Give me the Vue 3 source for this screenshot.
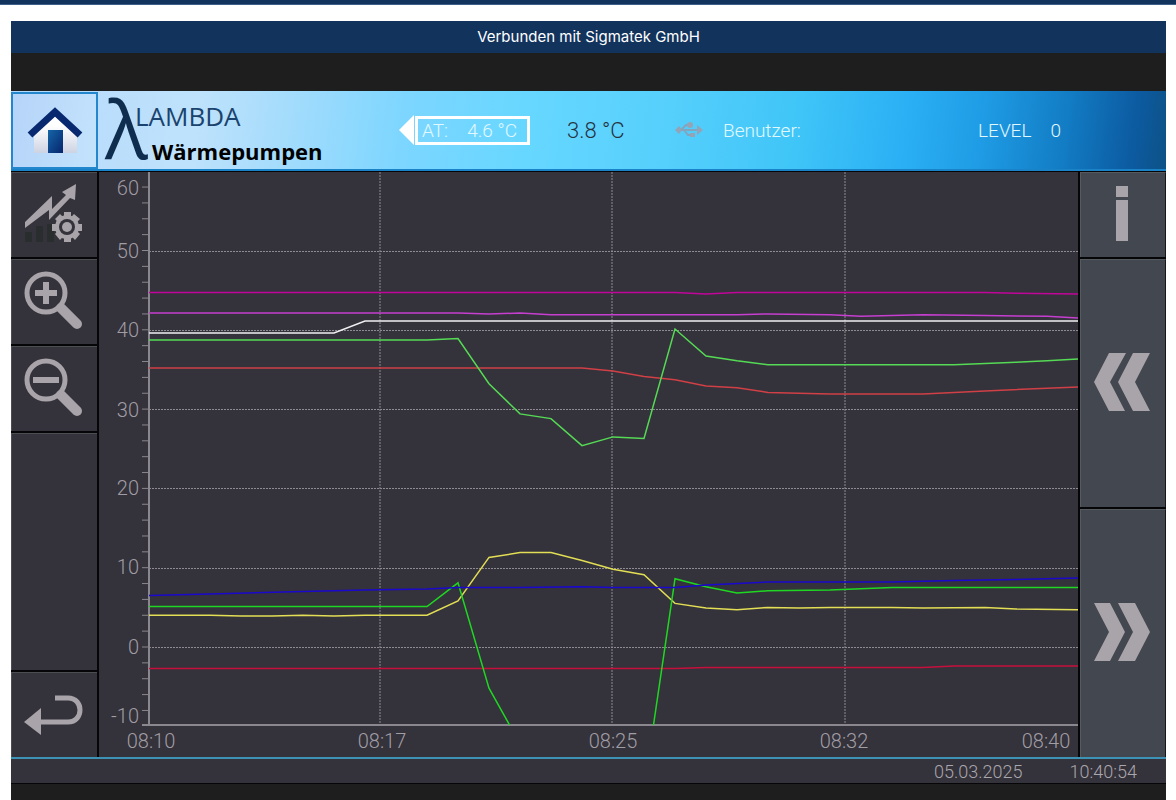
<script setup>
import { ref, computed } from 'vue';

const title = ref('Verbunden mit Sigmatek GmbH');
const outside = ref('4.6 °C');
const average = ref('3.8 °C');
const level = ref(0);
const date = ref('05.03.2025');
const time = ref('10:40:54');

// plot geometry inside the 979 x 585 drawing
const left = 50;
const right = 979;
const bottom = 553;
const toX = (minute) => 49 + minute * 31;
const toY = (value) => 475 - value * 7.93;

const gridValues = [50, 40, 30, 20, 10, 0];
const gridX = [281, 513, 746];

const ticks = [];
for (let v = -8; v <= 60; v += 2) ticks.push(v);

const yLabels = [
  { text: '60', y: 16 },
  { text: '50', y: 79 },
  { text: '40', y: 158 },
  { text: '30', y: 238 },
  { text: '20', y: 316 },
  { text: '10', y: 395 },
  { text: '0', y: 475 },
  { text: '-10', y: 544 }
];

const xLabels = [
  { text: '08:10', x: 52 },
  { text: '08:17', x: 283 },
  { text: '08:25', x: 514 },
  { text: '08:32', x: 745 },
  { text: '08:40', x: 947 }
];

// [minutes after 08:10, degrees]
const series = [
  { name: 'crimson', color: '#c5103e', data: [[0, -2.7], [17, -2.7], [18, -2.6], [25, -2.6], [26, -2.4], [30, -2.4]] },
  { name: 'yellow', color: '#e2de55', data: [[0, 4], [2, 4], [3, 3.9], [4, 3.9], [5, 4], [6, 3.9], [7, 4], [9, 4], [10, 5.8], [11, 11.3], [12, 11.9], [13, 11.9], [14, 10.9], [15, 9.8], [16, 9.1], [17, 5.5], [18, 4.9], [19, 4.7], [20, 5], [21, 4.9], [22, 5], [24, 5], [25, 4.9], [27, 5], [28, 4.8], [30, 4.7]] },
  { name: 'green', color: '#1fd722', data: [[0, 5.1], [9, 5.1], [10, 8.1], [11, -5.2], [12, -12.2], [16, -18], [17, 8.6], [18, 7.6], [19, 6.8], [20, 7.1], [22, 7.2], [24, 7.5], [30, 7.5]] },
  { name: 'blue', color: '#1a08cc', data: [[0, 6.5], [2, 6.7], [5, 7], [7, 7.2], [9, 7.3], [10, 7.5], [12, 7.5], [14, 7.6], [15, 7.5], [17, 7.5], [18, 7.8], [20, 8.2], [24, 8.2], [26, 8.4], [28, 8.5], [30, 8.7]] },
  { name: 'red', color: '#d04046', data: [[0, 35.2], [14, 35.2], [15, 34.8], [16, 34.1], [17, 33.7], [18, 32.9], [19, 32.7], [20, 32.1], [22, 31.9], [25, 31.9], [27, 32.3], [30, 32.8]] },
  { name: 'lime', color: '#55da55', data: [[0, 38.7], [9, 38.7], [10, 38.9], [11, 33.2], [12, 29.4], [13, 28.8], [14, 25.4], [15, 26.5], [16, 26.3], [17, 40.1], [18, 36.7], [19, 36.1], [20, 35.6], [26, 35.6], [28, 35.9], [29, 36.1], [30, 36.3]] },
  { name: 'violet', color: '#c63fd0', data: [[0, 42.1], [10, 42.1], [11, 42], [12, 42.1], [13, 41.9], [16, 41.9], [19, 41.9], [20, 42], [22, 41.9], [23, 41.7], [25, 41.9], [27, 41.8], [29, 41.7], [30, 41.5]] },
  { name: 'magenta', color: '#c0059a', data: [[0, 44.7], [17, 44.7], [18, 44.5], [19, 44.7], [27, 44.7], [28, 44.6], [30, 44.5]] },
  { name: 'white', color: '#f0f0f2', data: [[0, 39.6], [6, 39.6], [7, 41.1], [30, 41.1]] }
];

const lines = computed(() =>
  series.map((s) => ({
    ...s,
    points: s.data.map(([m, v]) => `${toX(m)},${toY(v).toFixed(1)}`).join(' ')
  }))
);
</script>

<template>
  <div class="page">
    <div class="stripe"></div>
    <div class="frame">
      <div class="titlebar">{{ title }}</div>
      <div class="band"></div>

      <header class="header">
        <button class="home" aria-label="Home">
          <svg viewBox="0 0 56 48" width="56" height="48">
            <defs>
              <linearGradient id="wall" x1="0" y1="0" x2="0" y2="1">
                <stop offset="0.3" stop-color="#ffffff" />
                <stop offset="1" stop-color="#cdd3e2" />
              </linearGradient>
              <linearGradient id="door" x1="0" y1="0" x2="1" y2="1">
                <stop offset="0" stop-color="#1565a8" />
                <stop offset="1" stop-color="#06256c" />
              </linearGradient>
            </defs>
            <path d="M28 8 L50 28 V47 H7 V28 Z" fill="url(#wall)" />
            <path d="M3 29 L28 6 L53 29" fill="none" stroke="#08286f" stroke-width="7" />
            <rect x="21" y="24" width="15" height="23" fill="url(#door)" />
          </svg>
        </button>

        <svg class="logo" viewBox="0 0 232 76" width="232" height="76">
          <text class="lambda" x="7" y="67">λ</text>
          <text class="brand" x="37" y="34">LAMBDA</text>
          <text class="product" x="54" y="68">Wärmepumpen</text>
        </svg>

        <div class="outside">
          <span class="pointer"></span>
          <span class="box"><span>AT:</span><span>{{ outside }}</span></span>
        </div>
        <span class="average">{{ average }}</span>
        <svg class="usb" viewBox="0 0 28 18" width="28" height="18">
          <g opacity="0.8">
            <path d="M1 9 H24 M6 9 L11 4 H14 M9 9 L13 14 H17" fill="none" stroke="#8f9bb0" stroke-width="2" />
            <path d="M22 4 L28 9 L22 14 Z" fill="#a59aa6" />
            <path d="M0 9 L4 5 L7 9 L4 13 Z" fill="#a59aa6" />
            <circle cx="15" cy="4" r="3" fill="#a59aa6" />
            <rect x="15" y="12" width="5" height="4" fill="#a59aa6" />
          </g>
        </svg>
        <span class="user">Benutzer:</span>
        <span class="level"><span>LEVEL</span><span>{{ level }}</span></span>
      </header>

      <main class="main">
        <nav class="side">
          <button class="key" aria-label="Kurven einstellen">
            <svg viewBox="0 0 60 60" width="60" height="60">
              <path d="M1 59 V49 H8 V59 Z M12 59 V43 H19 V59 Z M23 59 V41 H30 V59 Z" fill="#292d2e" />
              <path d="M1 39 L28 13 V26 L42 12 L38 9 L52 1 L51 17 L46 15 L25 37 V27 L1 45 Z" fill="#a8a4a9" />
              <path d="M40 29 H47 V59 H40 Z M28 41 H58 V48 H28 Z" fill="#a8a4a9" />
              <path d="M31 36 L36 31 L56 51 L51 57 Z M50 31 L56 36 L36 57 L31 51 Z" fill="#a8a4a9" />
              <circle cx="43" cy="44" r="12" fill="#a8a4a9" />
              <circle cx="43" cy="44" r="8" fill="#34323a" />
              <circle cx="43" cy="44" r="5" fill="#a8a4a9" />
            </svg>
          </button>
          <button class="key" aria-label="Vergrößern">
            <svg viewBox="0 0 60 60" width="60" height="60">
              <circle cx="22" cy="23" r="19" fill="none" stroke="#a8a4a9" stroke-width="5" />
              <path d="M11 23 H33 M22 12 V34" stroke="#a8a4a9" stroke-width="6" />
              <path d="M37 38 L53 54" stroke="#a8a4a9" stroke-width="10" stroke-linecap="round" />
            </svg>
          </button>
          <button class="key" aria-label="Verkleinern">
            <svg viewBox="0 0 60 60" width="60" height="60">
              <circle cx="22" cy="23" r="19" fill="none" stroke="#a8a4a9" stroke-width="5" />
              <path d="M9 23 H35" stroke="#a8a4a9" stroke-width="6" />
              <path d="M37 38 L53 54" stroke="#a8a4a9" stroke-width="10" stroke-linecap="round" />
            </svg>
          </button>
          <div class="key blank"></div>
          <button class="key" aria-label="Zurück">
            <svg viewBox="0 0 60 60" width="60" height="60">
              <path d="M31 15 H44 C60 15 60 39 44 39 H15" fill="none" stroke="#a8a4a9" stroke-width="5" />
              <path d="M0 39 L17 25 V52 Z" fill="#a8a4a9" />
            </svg>
          </button>
        </nav>

        <svg class="chart" viewBox="0 0 979 585">
          <defs>
            <clipPath id="plot">
              <rect :x="left" y="0" :width="right - left" :height="bottom" />
            </clipPath>
          </defs>
          <g class="grid">
            <line v-for="v in gridValues" :key="v" :x1="left" :x2="right" :y1="Math.round(toY(v)) + 0.5" :y2="Math.round(toY(v)) + 0.5" />
            <line v-for="x in gridX" :key="x" :x1="x" :x2="x" y1="0" :y2="bottom" />
          </g>
          <g class="axis">
            <line v-for="v in ticks" :key="v" x1="43" :x2="left" :y1="toY(v)" :y2="toY(v)" />
            <path :d="`M${left} 0 V${bottom} H${right} M43 ${bottom} H${left}`" />
          </g>
          <g clip-path="url(#plot)">
            <polyline v-for="line in lines" :key="line.name" class="curve" :points="line.points" :stroke="line.color" />
          </g>
          <g class="labels">
            <text v-for="l in yLabels" :key="l.text" x="40" :y="l.y + 7" text-anchor="end">{{ l.text }}</text>
            <text v-for="l in xLabels" :key="l.text" :x="l.x" y="576" text-anchor="middle">{{ l.text }}</text>
          </g>
        </svg>

        <nav class="side">
          <button class="key light" aria-label="Information">
            <svg viewBox="0 0 12 55" width="12" height="55">
              <path d="M0 0 H12 V11 H0 Z M0 14 H12 V55 H0 Z" fill="#a8a4a9" />
            </svg>
          </button>
          <button class="key light tall" aria-label="Früher">
            <svg viewBox="0 0 56 58" width="56" height="58">
              <path d="M15 0 H32 L16 29 L31 58 H15 L0 29 Z M39 0 H56 L41 29 L56 58 H39 L24 29 Z" fill="#a8a4a9" />
            </svg>
          </button>
          <button class="key light tall" aria-label="Später">
            <svg viewBox="0 0 56 58" width="56" height="58">
              <path d="M0 0 H16 L31 29 L16 58 H0 L15 29 Z M24 0 H41 L56 29 L41 58 H24 L39 29 Z" fill="#a8a4a9" />
            </svg>
          </button>
        </nav>
      </main>

      <footer class="status">
        <span>{{ date }}</span>
        <span>{{ time }}</span>
      </footer>
    </div>
  </div>
</template>

<style>
body {
  background-color: #ffffff;
}
</style>

<style scoped>
.page {
  box-sizing: border-box;
  min-height: 100vh;
  display: flex;
  flex-direction: column;
  font-family: Roboto, "Liberation Sans", sans-serif;
  font-weight: 300;
}

.stripe {
  height: 4px;
  background-color: #12335c;
  border-bottom: 1px solid #3d5f88;
}

.frame {
  flex: 1;
  display: flex;
  flex-direction: column;
  margin: 16px 10px 0 11px;
  background-color: #1e1e1e;
}

.titlebar {
  height: 32px;
  line-height: 32px;
  text-align: center;
  background-color: #12335c;
  color: #ffffff;
  font-family: Inter, "Liberation Sans", sans-serif;
  font-size: 15px;
  font-weight: 400;
}

.band {
  height: 38px;
}

.header {
  box-sizing: border-box;
  height: 80px;
  display: flex;
  align-items: center;
  border-bottom: 2px solid #1a82c6;
  background: linear-gradient(97deg, #b4d9fa 0%, #bfe2fc 16%, #a4dcfc 24%, #7dd6ff 34%, #66d7ff 45%, #55cffc 57%, #3fc5f7 68%, #2bb0f5 77%, #1e9be4 84%, #127cc4 91%, #0c5aa0 97%, #0d5286 100%);
  color: #e2f8ff;
  font-size: 19px;
}

.home {
  box-sizing: border-box;
  width: 87px;
  height: 77px;
  padding: 0;
  border: 2px solid #2487cd;
  background: linear-gradient(100deg, #b5d4f9, #c3e3fc);
  display: flex;
  align-items: center;
  justify-content: center;
}

.logo {
  flex: none;
  overflow: visible;
}

.lambda {
  font-family: "Open Sans", "Noto Sans", sans-serif;
  font-size: 80px;
  font-weight: 400;
  fill: #0f2e4f;
}

.brand {
  font-family: "Open Sans", "Noto Sans", sans-serif;
  font-size: 26px;
  font-weight: 400;
  fill: #1a436e;
}

.product {
  font-family: "Open Sans", "Noto Sans", sans-serif;
  font-size: 22px;
  font-weight: 700;
  fill: #000000;
}

.outside {
  display: flex;
  align-items: center;
  margin-left: 69px;
}

.pointer {
  border: 15px solid transparent;
  border-left: 0;
  border-right-color: #ffffff;
  margin-right: 1px;
}

.box {
  box-sizing: border-box;
  width: 115px;
  height: 29px;
  display: flex;
  align-items: center;
  justify-content: space-between;
  padding: 0 10px 0 4px;
  border: 3px solid #ffffff;
}

.average {
  width: 60px;
  margin-left: 37px;
  color: #26323e;
  font-size: 22px;
  white-space: nowrap;
}

.usb {
  margin-left: 48px;
}

.user {
  margin-left: 20px;
}

.level {
  display: flex;
  gap: 19px;
  margin-left: auto;
  margin-right: 105px;
}

.main {
  display: grid;
  grid-template-columns: 86px 1fr 86px;
  gap: 2px;
  padding-top: 1px;
  background-color: #060609;
}

.side {
  display: flex;
  flex-direction: column;
  gap: 2px;
}

.key {
  box-sizing: border-box;
  height: 85px;
  padding: 0 1px 4px 0;
  border: 0 solid #4b4e51;
  border-top-width: 1px;
  border-left-width: 1px;
  background-color: #34323a;
  display: flex;
  align-items: center;
  justify-content: center;
}

.blank,
.tall {
  flex: 1;
}

.light {
  padding-right: 3px;
  border-color: #565b60;
  border-right: 1px solid #15171b;
  background-color: #434750;
}

.chart {
  display: block;
  width: 100%;
  background-color: #34323a;
}

.grid line {
  stroke: #8e8c92;
  stroke-width: 1px;
  stroke-dasharray: 2 1;
}

.axis line,
.axis path {
  fill: none;
  stroke: #8a878e;
  stroke-width: 2px;
}

.axis line {
  stroke-width: 1px;
}

.curve {
  fill: none;
  stroke-width: 1.5px;
}

.labels text {
  fill: #a19da5;
  font-size: 20px;
}

.status {
  box-sizing: border-box;
  height: 27px;
  display: flex;
  align-items: center;
  justify-content: flex-end;
  gap: 47px;
  padding-right: 29px;
  border-top: 2px solid #3c93b5;
  border-bottom: 1px solid #060609;
  background-color: #34323a;
  color: #aaa6ad;
  font-size: 18px;
}
</style>
